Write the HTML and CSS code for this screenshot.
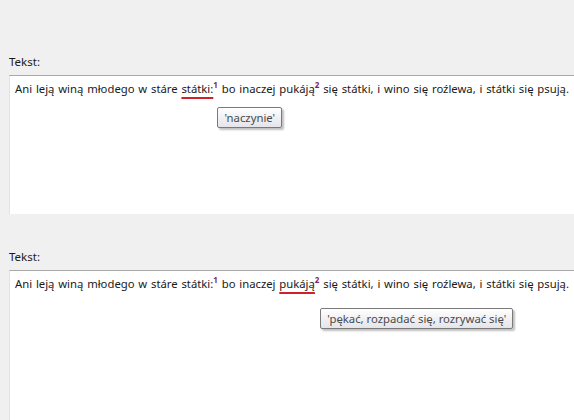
FILE: index.html
```html
<!DOCTYPE html>
<html>
<head>
<meta charset="utf-8">
<link rel="stylesheet" href="styles.css">
</head>
<body>
<div class="page">
  <section class="field first">
    <div class="label">Tekst:</div>
    <div class="box">
      <p class="line">Ani leją winą młodego w stáre <span class="gloss">státki:<span class="tip tip1">'naczynie'</span></span><sup>1</sup> bo inaczej pukáją<sup>2</sup> się státki, i wino się roźlewa, i státki się psują.</p>
    </div>
  </section>
  <section class="field second">
    <div class="label">Tekst:</div>
    <div class="box tall">
      <p class="line">Ani leją winą młodego w stáre státki:<sup>1</sup> bo inaczej <span class="gloss">pukáją<span class="tip tip2">'pękać, rozpadać się, rozrywać się'</span></span><sup>2</sup> się státki, i wino się roźlewa, i státki się psują.</p>
    </div>
  </section>
</div>
</body>
</html>
```
FILE: styles.css
```css
html, body {
  margin: 0;
  padding: 0;
  background: #f0f0f0;
}
body {
  font-family: "Noto Sans", "DejaVu Sans", sans-serif;
  font-size: 11.3px;
  color: #1a1a1a;
  width: 574px;
  height: 420px;
  overflow: hidden;
}
.page {
  display: flex;
  flex-direction: column;
}
.field {
  display: flex;
  flex-direction: column;
  padding-left: 9px;
}
.first { padding-top: 55px; }
.second { padding-top: 36px; }
.label {
  height: 20px;
  line-height: 14px;
  font-size: 11.5px;
}
.box {
  background: #fff;
  border-top: 1px solid #a9a9a9;
  border-left: 1px solid #e3e3e3;
  height: 139px;
  padding: 4px 0 0 5px;
  box-sizing: border-box;
}
.box.tall { height: 160px; }
.line {
  margin: 0;
  line-height: 18px;
  white-space: nowrap;
  word-spacing: 0.85px;
}
.gloss {
  position: relative;
  text-decoration: underline;
  text-decoration-color: #d0202a;
  text-decoration-thickness: 2px;
  text-underline-offset: 4px;
}
sup {
  font-size: 8px;
  font-weight: bold;
  color: #7a1f6e;
  vertical-align: 5px;
  line-height: 0;
}
.tip {
  position: absolute;
  top: 26px;
  white-space: nowrap;
  text-decoration: none;
  word-spacing: 0;
  display: inline-block;
  padding: 2px 6px 2px;
  border: 1px solid #7a7a7a;
  border-radius: 2px;
  background: linear-gradient(#ffffff, #e4e4ea);
  box-shadow: 2px 2px 2px rgba(0,0,0,0.25);
  color: #4a4a4a;
  line-height: 15px;
}
.tip1 { left: 36px; }
.tip2 { left: 41px; top: 32px; }
```
